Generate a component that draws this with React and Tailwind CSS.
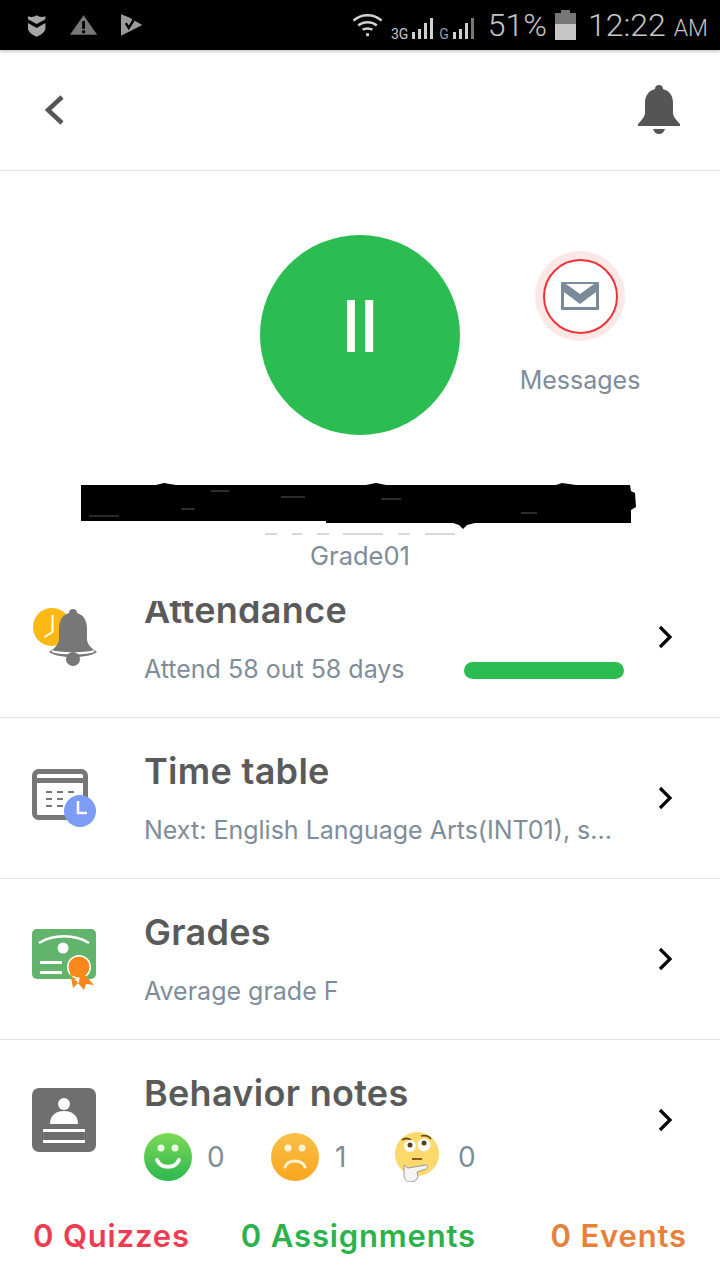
import React from 'react';

const sans = 'font-["Inter",sans-serif]';

function Chevron() {
  return (
    <svg width="18" height="24" viewBox="0 0 18 24" className="shrink-0">
      <path d="M3 2l10 10L3 22" fill="none" stroke="#000" strokeWidth="3.2" />
    </svg>
  );
}

function Bars({ heights, dim = 0 }) {
  return (
    <div className="flex items-end gap-[3px] h-[21px]">
      {heights.map((h, i) => (
        <div
          key={i}
          className={i >= heights.length - dim ? 'w-[3px] bg-[#777]' : 'w-[3px] bg-[#d0d0d0]'}
          style={{ height: h }}
        />
      ))}
    </div>
  );
}

function StatusBar() {
  return (
    <div className='relative z-10 h-[50px] bg-black flex items-center pl-[26px] pr-[12px] text-[#c6c6c6] font-["Roboto",sans-serif] font-light shadow-[0_1px_4px_rgba(0,0,0,0.3)]'>
      <svg width="22" height="24" viewBox="0 0 22 24" fill="#a6a6a6">
        <path d="M2 3c3 1 6 1 9-1 3 2 6 2 9 1v3l-9 5-9-5z" />
        <path d="M2 10l9 5 9-5v5c0 4-4 7-9 9-5-2-9-5-9-9z" />
      </svg>
      <svg width="30" height="22" viewBox="0 0 30 22" className="ml-[22px]">
        <path d="M15 1l14 20H1z" fill="#777" />
        <rect x="13.500" y="7" width="3" height="8" fill="#000" />
        <rect x="13.500" y="16.500" width="3" height="3" fill="#000" />
      </svg>
      <svg width="24" height="24" viewBox="0 0 24 24" className="ml-[21px]">
        <path d="M1 1l8 3 14 8-22 11z" fill="#9a9a9a" />
        <path d="M6 10l3 5 8-13" fill="none" stroke="#000" strokeWidth="2.500" />
      </svg>
      <svg width="32" height="26" viewBox="0 0 32 26" className="ml-[209px]">
        <g fill="none" stroke="#d0d0d0" strokeWidth="2.600">
          <path d="M1.500 8.500c8-7.500 21-7.500 29 0" />
          <path d="M6.500 13.500c5-4.500 14-4.500 19 0" />
          <path d="M11 18c2.600-2 7.400-2 10 0" />
        </g>
        <rect x="14.500" y="21.500" width="3" height="3" fill="#d0d0d0" />
      </svg>
      <span className="ml-[8px] self-end mb-[9px] text-[14px] leading-[14px] font-normal">3G</span>
      <div className="ml-[4px] self-end mb-[11px]">
        <Bars heights={[7, 10, 16, 21]} />
      </div>
      <span className="ml-[6px] self-end mb-[9px] text-[14px] leading-[14px] text-[#999] font-normal">G</span>
      <div className="ml-[4px] self-end mb-[11px]">
        <Bars heights={[7, 10, 16, 21]} dim={1} />
      </div>
      <span className="ml-[14px] text-[32px] leading-none">51%</span>
      <div className="ml-[8px] w-[21px] flex flex-col items-center">
        <div className="w-[9px] h-[3px] bg-[#777]" />
        <div className="w-[21px] h-[11px] bg-[#777]" />
        <div className="w-[21px] h-[16px] bg-[#c6c6c6]" />
      </div>
      <span className="ml-[12px] text-[32px] leading-none">12:22</span>
      <span className="ml-[8px] text-[23px] leading-none self-end mb-[10px]">AM</span>
    </div>
  );
}

function Header() {
  return (
    <div className="h-[121px] border-b border-[#e4e4e4] flex items-center justify-between pl-[42px] pr-[40px]">
      <svg width="24" height="32" viewBox="0 0 24 32">
        <path d="M20 3L6 16l14 13" fill="none" stroke="#555" strokeWidth="4.500" />
      </svg>
      <svg width="42" height="50" viewBox="0 0 42 50" fill="#555">
        <path d="M21 0c2.500 0 4 1.500 4 4 7 2 10 7 10 14v10c0 3 3 7 7 11v2H0v-2c4-4 7-8 7-11V18C7 11 10 6 17 4c0-2.500 1.500-4 4-4z" />
        <path d="M15 44h12c-1 3-3 5-6 5s-5-2-6-5z" />
      </svg>
    </div>
  );
}

function Hero() {
  return (
    <div className="h-[430px] overflow-hidden">
      <div className="grid grid-cols-[260px_200px_1fr] pt-[64px]">
        <div />
        <div className="w-[200px] h-[200px] rounded-full bg-[#2bbd51] flex items-center justify-center pb-[12px]">
          <span dir="rtl" className='text-white text-[66px] leading-none font-["DejaVu_Sans",sans-serif] tracking-[-2px] [-webkit-text-stroke:2px_white]'>
            اا
          </span>
        </div>
        <div className="flex flex-col items-center pt-[16px] pr-[20px]">
          <div className="w-[90px] h-[90px] rounded-full bg-[#fde8e8] flex items-center justify-center">
            <div className="w-[75px] h-[75px] rounded-full bg-white border-2 border-[#ee3239] flex items-center justify-center">
              <svg width="38" height="28" viewBox="0 0 38 28">
                <rect width="38" height="28" rx="1" fill="#7b8a98" />
                <path d="M5 2h28L19 12z" fill="#fff" />
                <path d="M3 10l16 12 16-12v15H3z" fill="#fff" />
              </svg>
            </div>
          </div>
          <span className={`${sans} mt-[20px] text-[25px] leading-[38px] text-[#7f8c99] whitespace-nowrap`}>Messages</span>
        </div>
      </div>
      {/* scribbled-out name */}
      <svg width="560" height="46" viewBox="0 0 560 46" className="block mt-[48px] ml-[81px]">
        <path d="M0 2h75l8-2 12 2h190l10-2 10 2h170l6-2 14 2h54l1 6 4 2 1 14-5 3v13H394l-8 2-4 4-4-4-6-2H245v-2H0z" fill="#000" />
        <path d="M8 33h30M100 26h14M300 16h20M200 14h24M440 30h16M130 8h18" stroke="#555" strokeWidth="1" />
      </svg>
      <div className="ml-[265px] w-[190px] h-[6px] flex items-end justify-between">
        <div className="w-[12px] h-[2px] bg-[#d5d8dc]" />
        <div className="w-[10px] h-[2px] bg-[#d5d8dc]" />
        <div className="w-[12px] h-[2px] bg-[#d5d8dc]" />
        <div className="w-[40px] h-[2px] bg-[#d5d8dc]" />
        <div className="w-[12px] h-[2px] bg-[#d5d8dc]" />
        <div className="w-[30px] h-[2px] bg-[#d5d8dc]" />
      </div>
      <p className={`${sans} mt-[5px] text-center text-[25.500px] leading-[32px] text-[#7f8c99]`}>Grade01</p>
    </div>
  );
}

function Row({ icon, title, subClass = '', children }) {
  return (
    <div className="h-[161px] border-b border-[#e4e4e4] flex items-center pr-[45px]">
      <div className="w-[144px] pl-[32px] shrink-0">{icon}</div>
      <div className="flex-1 min-w-0 self-start pt-[33px]">
        <h3 className={`${sans} text-[36px] leading-[40px] font-semibold text-[#5a5a5a] tracking-[0.3px]`}>{title}</h3>
        <div className={`${sans} mt-[20px] h-[40px] flex items-center text-[25px] text-[#7f8c99] ${subClass}`}>{children}</div>
      </div>
      <Chevron />
    </div>
  );
}

const AttendanceIcon = (
  <svg width="66" height="60" viewBox="0 0 66 60">
    <circle cx="20" cy="20" r="19" fill="#fcb813" />
    <path d="M20.500 8v17l-8 5" fill="none" stroke="#fff" strokeWidth="2" />
    <g transform="translate(2 0)">
      <path d="M39 2c2 0 4 1 4 4 7 2 10 8 10 16v10c0 5 4 9 10 13-3 3-14 5-24 5S18 48 15 45c6-4 10-8 10-13V22c0-8 3-14 10-16 0-3 2-4 4-4z" fill="#777" />
      <path d="M18 44c6 3 36 3 42 0" fill="none" stroke="#fff" strokeWidth="2" />
      <circle cx="39" cy="52" r="7" fill="#777" />
    </g>
  </svg>
);

const TimetableIcon = (
  <svg width="66" height="58" viewBox="0 0 66 58">
    <rect x="2.500" y="2.500" width="51" height="46" rx="4" fill="#fff" stroke="#777" strokeWidth="5" />
    <rect x="3" y="9" width="50" height="5" fill="#777" />
    <g fill="#777">
      <rect x="14" y="22" width="6" height="2" />
      <rect x="25" y="22" width="6" height="2" />
      <rect x="36" y="22" width="6" height="2" />
      <rect x="14" y="29" width="6" height="2" />
      <rect x="25" y="29" width="6" height="2" />
      <rect x="14" y="36" width="6" height="2" />
      <rect x="25" y="36" width="6" height="2" />
    </g>
    <circle cx="48" cy="42" r="16" fill="#7d9cf5" />
    <path d="M46 32v12h9" fill="none" stroke="#fff" strokeWidth="2.500" />
  </svg>
);

const GradesIcon = (
  <svg width="66" height="62" viewBox="0 0 66 62">
    <rect x="0" y="1" width="64" height="50" rx="5" fill="#62b46c" />
    <path d="M7 15c14-9 36-9 50 0" fill="none" stroke="#fff" strokeWidth="2.500" />
    <circle cx="31" cy="20" r="5.500" fill="#fff" />
    <rect x="8" y="33" width="22" height="3" fill="#fff" />
    <rect x="8" y="43" width="22" height="3" fill="#fff" />
    <circle cx="47" cy="39" r="12" fill="#fff" />
    <path d="M38 44l3 16 6-6 1-8zM50 44l12 13-8-1-2 6-12-14z" fill="#f8881a" />
    <circle cx="47" cy="39" r="10.500" fill="#f8881a" />
  </svg>
);

const BehaviorIcon = (
  <svg width="64" height="64" viewBox="0 0 64 64">
    <rect width="64" height="64" rx="7" fill="#6f6f6f" />
    <circle cx="32" cy="16" r="6" fill="#fff" />
    <path d="M18 36c0-9 6-13 14-13s14 4 14 13z" fill="#fff" />
    <rect x="11" y="41" width="42" height="3" fill="#fff" />
    <rect x="11" y="52" width="42" height="3" fill="#fff" />
  </svg>
);

function SmileFace() {
  return (
    <svg width="48" height="48" viewBox="0 0 48 48" className="shrink-0">
      <defs>
        <linearGradient id="greenFace" x1="0" y1="0" x2="0" y2="1">
          <stop offset="0" stopColor="#7ed957" />
          <stop offset="1" stopColor="#2bb84e" />
        </linearGradient>
      </defs>
      <circle cx="24" cy="24" r="24" fill="url(#greenFace)" />
      <circle cx="17" cy="15" r="3.500" fill="#e8fbe0" />
      <circle cx="31" cy="15" r="3.500" fill="#e8fbe0" />
      <path d="M13 27c4 9 18 9 22 0" fill="none" stroke="#fff" strokeWidth="4" strokeLinecap="round" />
    </svg>
  );
}

function SadFace() {
  return (
    <svg width="48" height="48" viewBox="0 0 48 48" className="shrink-0">
      <defs>
        <linearGradient id="orangeFace" x1="0" y1="0" x2="0" y2="1">
          <stop offset="0" stopColor="#fbbf4a" />
          <stop offset="1" stopColor="#f9a61e" />
        </linearGradient>
      </defs>
      <circle cx="24" cy="24" r="24" fill="url(#orangeFace)" />
      <circle cx="17" cy="15" r="3.500" fill="#fff3d6" />
      <circle cx="31" cy="15" r="3.500" fill="#fff3d6" />
      <path d="M14 34c3-8 17-8 20 0" fill="none" stroke="#fff3d6" strokeWidth="3" strokeLinecap="round" />
    </svg>
  );
}

function ThinkingFace() {
  return (
    <svg width="46" height="50" viewBox="0 0 46 50" className="shrink-0">
      <circle cx="22" cy="22" r="22" fill="#fcd96a" />
      <path d="M7 8c3-2 6-2 9 0M26 4c4-1 8 0 10 3" fill="none" stroke="#6b4a1e" strokeWidth="1.800" />
      <circle cx="15" cy="14" r="6" fill="#fff" />
      <circle cx="29" cy="13" r="6.500" fill="#fff" />
      <circle cx="15" cy="13" r="2.500" fill="#5a4020" />
      <circle cx="29" cy="11" r="2.500" fill="#5a4020" />
      <path d="M17 27h10" stroke="#8a5a20" strokeWidth="2" />
      <path d="M9 33l4 3 6-1 12-2c2 0 2 3 0 4l-9 3 1 5c-1 3-4 5-8 5s-5-3-6-6z" fill="#f4f4f4" stroke="#9a9a9a" strokeWidth="1" />
    </svg>
  );
}

function List() {
  return (
    <div className="h-[599px] overflow-hidden bg-white">
      <div className="-mt-[44px]">
        <Row icon={AttendanceIcon} title="Attendance">
          <span className="flex-1 whitespace-nowrap">Attend 58 out 58 days</span>
          <div className="w-[160px] h-[17px] rounded-full bg-[#2bbd51] mr-[33px] mt-[1px]" />
        </Row>
        <Row icon={TimetableIcon} title="Time table">
          <span className="truncate pr-[20px]">Next: English Language Arts(INT01), s...</span>
        </Row>
        <Row icon={GradesIcon} title="Grades">
          Average grade F
        </Row>
        <Row icon={BehaviorIcon} title="Behavior notes" subClass="pt-[8px]">
          <SmileFace />
          <span className="ml-[15px] w-[64px] text-[28px]">0</span>
          <SadFace />
          <span className="ml-[16px] w-[60px] text-[28px]">1</span>
          <ThinkingFace />
          <span className="ml-[17px] text-[28px]">0</span>
        </Row>
      </div>
    </div>
  );
}

function Footer() {
  return (
    <div className={`${sans} h-[80px] bg-white flex pl-[33px] pr-[33px] pt-[14px] text-[31px] leading-[44px] font-semibold tracking-[0.85px]`}>
      <span className="text-[#ee3b52]">0 Quizzes</span>
      <span className="ml-[51px] text-[#2bb24c]">0 Assignments</span>
      <span className="ml-auto text-[#e8803c]">0 Events</span>
    </div>
  );
}

export default function App() {
  return (
    <div className="w-[720px] h-[1280px] overflow-hidden bg-white">
      <StatusBar />
      <Header />
      <Hero />
      <List />
      <Footer />
    </div>
  );
}
